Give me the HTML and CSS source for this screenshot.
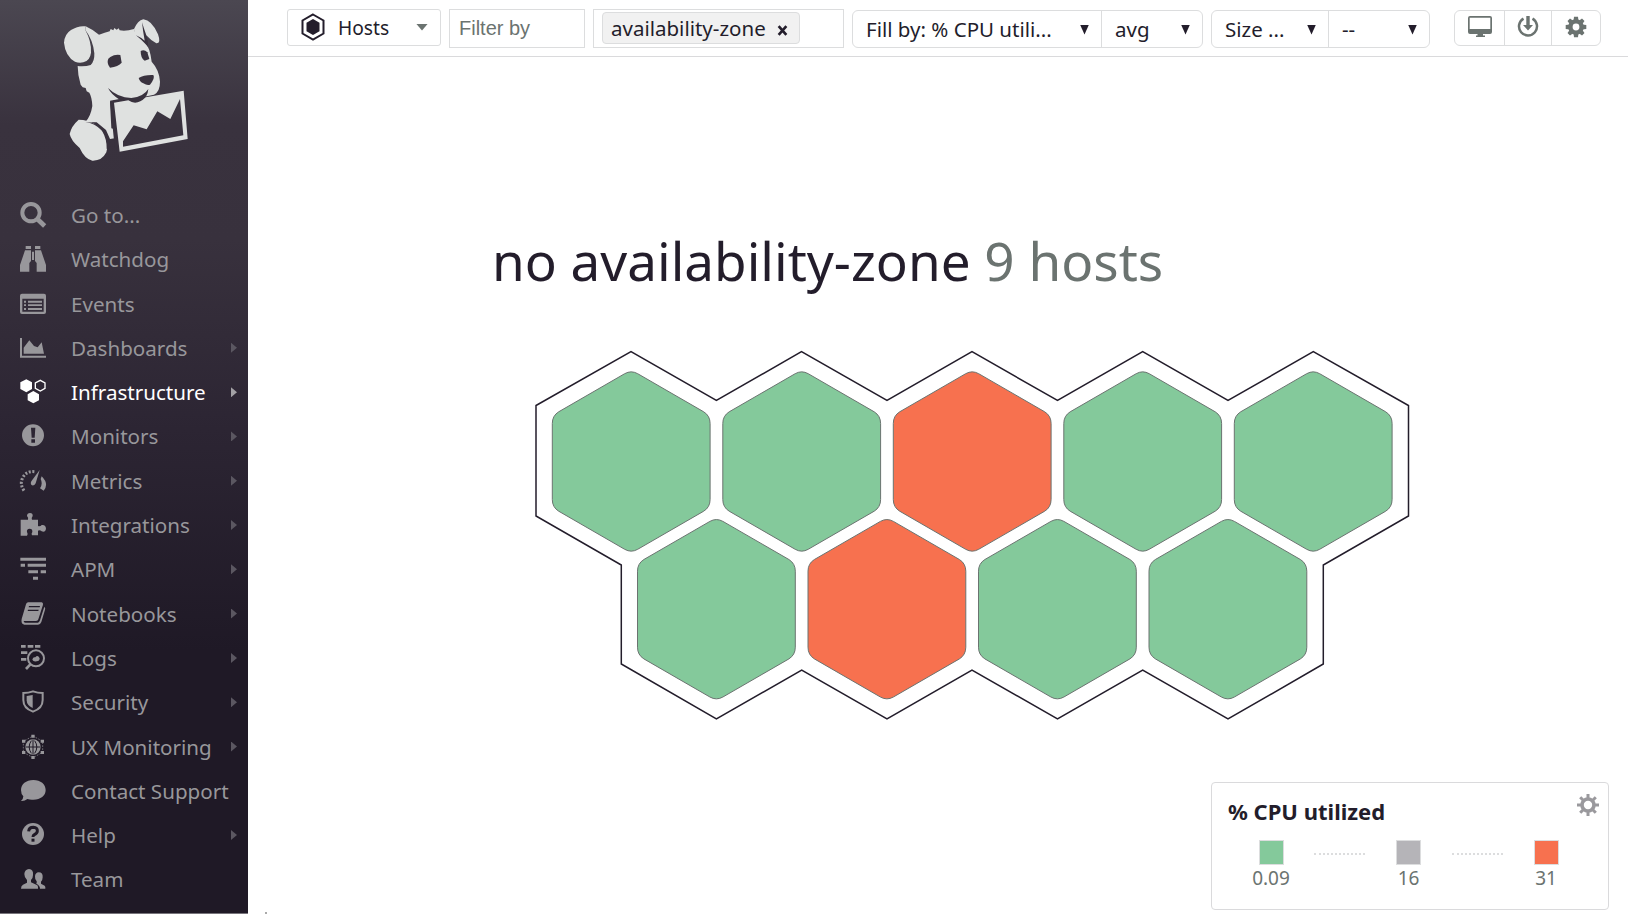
FILE: index.html
```html
<!DOCTYPE html>
<html lang="en">
<head>
<meta charset="utf-8">
<title>Host Map</title>
<link rel="stylesheet" href="styles.css">
</head>
<body>
<div class="app">
  <nav class="sidebar">
    <svg class="logo" viewBox="0 0 750 540" fill="#dfe1e0">
      <path d="M277 318Q276 292 268 278L260 274L257 264L248 262L242 254Q233 225 233 198Q256 200 272 195Q284 184 283 160Q279 120 256 90L257 79Q275 87 297 104Q315 98 329 94L332 87L340 91L343 84L350 89L356 85L359 91Q380 94 402 87L408 106L434 125Q450 142 455 185Q478 210 480 245Q480 275 462 284L444 288L360 302L330 306L334 385L344 388L344 415L330 417L318 390L290 367L256 366Q272 350 277 318Z"/>
      <path d="M192 128Q194 102 213 90Q235 76 257 79L256 90Q275 125 273 158Q270 182 250 187Q237 190 225 185Q196 169 192 128Z"/>
      <path d="M402 87Q413 62 430 58Q455 60 474 103Q484 131 469 130Q453 122 439 106L434 126L405 105Z"/>
      <path d="M236 359Q292 360 316 407Q325 434 319 457Q306 483 277 482Q254 477 239 444Q213 422 209 402Q214 378 236 359Z"/>
      <g class="logo-cut">
        <path d="M426 67Q429 94 434 122Q422 112 408 106Q424 119 437 133L444 141Q445 122 439 106Q432 87 426 67Z"/>
        <path d="M331 171Q345 162 361 165L365 188Q355 200 330 203Q319 189 325 176Z"/>
        <path d="M422 153Q433 147 442 157L448 177L434 182Q422 176 422 153Z"/>
        <path d="M416 234Q431 224 460 225Q466 234 450 254Q442 258 430 250Q419 246 416 234Z"/>
        <path d="M324 264Q353 293 394 294Q431 290 445 267Q443 292 422 306Q389 315 359 299Q334 284 324 264Z"/>
        <path d="M256 366Q291 366 314 392Q325 408 331 440L320 447Q321 417 306 392Q285 370 256 366Z"/>
        <path d="M330 302L358 297L370 302L342 307L356 445L344 441Z"/>
      </g>
      <path fill-rule="evenodd" d="M342 308L385 301Q410 319 437 292L551 272L563 417L359 455ZM369 424L401 376L440 388L472 334L511 357L540 297L550 406L369 440Z"/>
    </svg>
    <ul class="menu">
      <li class="item"><svg class="icon" viewBox="0 0 84 84"><circle class="line" cx="36" cy="35" r="26" stroke-width="12"/><path class="line" d="M55 54L77 75" stroke-width="14"/></svg><span>Go to...</span></li>
      <li class="item"><svg class="icon" viewBox="0 0 84 84"><path d="M20 3H36V12H20ZM48 3H64V12H48ZM18 16H36V48L31 54V80H3V60ZM66 16H48V48L53 54V80H81V60ZM39 20H45V45H39Z"/></svg><span>Watchdog</span></li>
      <li class="item"><svg class="icon" viewBox="0 0 84 84"><path fill-rule="evenodd" d="M9 11H75Q81 11 81 17V66Q81 72 75 72H9Q3 72 3 66V17Q3 11 9 11ZM10 26V65H74V26Z"/><path d="M15 32H21V38H15ZM27 32H69V38H27ZM15 43H21V48H15ZM27 43H69V48H27ZM15 54H21V60H15ZM27 54H69V60H27Z"/></svg><span>Events</span></li>
      <li class="item"><svg class="icon" viewBox="0 0 84 84"><path d="M3 12H9V65H81V71H3ZM14 59V41L31 19L45 36L56 40L68 25L75 59Z"/></svg><span>Dashboards</span><i class="arrow"></i></li>
      <li class="item active"><svg class="icon" viewBox="0 0 84 84"><path d="M22 4L39 13V33L22 43L4 33V13ZM43 39L60 49V67L43 76L26 67V49Z"/><path class="line" d="M64 7L78 15V31L64 39L49 31V15Z" stroke-width="4"/></svg><span>Infrastructure</span><i class="arrow"></i></li>
      <li class="item"><svg class="icon" viewBox="0 0 84 84"><path fill-rule="evenodd" d="M42 7A33 33 0 1 1 42 73A33 33 0 1 1 42 7ZM36 17L38 47H47L49 17ZM37 52V62H48V52Z"/></svg><span>Monitors</span><i class="arrow"></i></li>
      <li class="item"><svg class="icon" viewBox="0 0 84 84"><path class="line" d="M15 71Q2 51 10 35Q20 11 47 14" stroke-width="9" stroke-dasharray="6 5"/><path d="M62 9L50 49Q47 57 39 55Q33 51 37 43ZM68 28Q91 51 74 71L63 64Q72 51 65 36Z"/></svg><span>Metrics</span><i class="arrow"></i></li>
      <li class="item"><svg class="icon" viewBox="0 0 84 84"><path d="M5 26H27Q29 20 24 15Q24 6 33 6Q42 6 41 15Q36 21 39 26H57V45Q64 47 68 42Q80 40 81 53Q79 65 68 61Q62 55 57 59V73H39Q36 68 40 63Q41 53 32 53Q22 54 24 63Q28 69 24 74H5Z"/></svg><span>Integrations</span><i class="arrow"></i></li>
      <li class="item"><svg class="icon" viewBox="0 0 84 84"><path d="M4 8H81V17H4ZM5 26H18V35H5ZM26 26H81V35H26ZM28 46H57V55H28ZM65 46H81V55H65ZM42 65H57V74H42Z"/></svg><span>APM</span><i class="arrow"></i></li>
      <li class="item"><svg class="icon" viewBox="0 0 84 84"><path fill-rule="evenodd" d="M27 7H68Q73 8 72 14L58 58Q57 63 51 63H14Q14 68 19 68H57Q61 67 63 61L76 20Q80 24 78 29L67 66Q64 74 57 74H16Q5 72 8 57L21 13Q22 8 27 7ZM30 18L29 22H62L63 18ZM27 29L26 33H58L59 29Z"/></svg><span>Notebooks</span><i class="arrow"></i></li>
      <li class="item"><svg class="icon" viewBox="0 0 84 84"><path d="M6 3H20V11H6ZM26 3H43V11H26ZM48 3H64V11H48ZM6 22H25V30H6ZM6 42H22V50H6Z"/><circle class="line" cx="51" cy="43" r="24" stroke-width="6"/><path class="line" d="M34 61L21 75" stroke-width="8"/><path d="M40 47Q42 38 49 40Q56 30 62 43Q62 52 53 52Q43 54 40 47Z"/></svg><span>Logs</span><i class="arrow"></i></li>
      <li class="item"><svg class="icon" viewBox="0 0 84 84"><path class="line" d="M13 15Q28 15 42 10Q56 15 71 15V36Q71 61 42 71Q13 61 13 36Z" stroke-width="6"/><path d="M41 21V60Q23 52 23 37V24Z"/></svg><span>Security</span><i class="arrow"></i></li>
      <li class="item"><svg class="icon" viewBox="0 0 84 84"><path class="line" d="M42 9L71 25V58L42 74L13 58V25Z" stroke-width="2" stroke-dasharray="5 4"/><circle cx="42" cy="42" r="23"/><path class="mark" d="M20 42H64M42 20V64M37 23Q24 42 37 61M47 23Q60 42 47 61" stroke-width="3"/><path d="M37 5H47V14H37ZM37 69H47V78H37ZM9 20H19V29H9ZM65 20H75V29H65ZM9 54H19V63H9ZM65 54H75V63H65Z"/></svg><span>UX Monitoring</span><i class="arrow"></i></li>
      <li class="item"><svg class="icon" viewBox="0 0 84 84"><path d="M43 9C65 9 80 22 80 39S65 68 43 68Q34 69 25 66Q17 73 6 72Q13 66 13 58Q6 51 6 39C6 22 21 9 43 9Z"/></svg><span>Contact Support</span></li>
      <li class="item"><svg class="icon" viewBox="0 0 84 84"><path d="M42 6A33 33 0 1 1 42 72A33 33 0 1 1 42 6Z"/><path class="mark" d="M29 31Q30 19 43 19Q56 20 55 30Q55 36 46 41Q42 43 42 48" stroke-width="9"/><path class="mark" d="M42 53V62" stroke-width="9"/></svg><span>Help</span><i class="arrow"></i></li>
      <li class="item"><svg class="icon" viewBox="0 0 84 84"><path d="M30 12Q44 14 42 30Q42 40 36 45V52L55 61Q58 65 57 71H6Q6 62 12 59L24 53V45Q16 38 16 27Q17 13 30 12ZM59 22Q72 22 71 37Q71 45 66 50V56L77 62Q80 65 79 71H63Q63 62 52 56Q54 52 53 49Q47 41 48 34Q49 23 59 22Z"/></svg><span>Team</span></li>
    </ul>
  </nav>
  <main class="main">
    <header class="toolbar">
      <div class="box hosts"><svg class="hosts-icon" viewBox="0 0 24 28"><path d="M12 1.500L22.500 7.500V20.500L12 26.500L1.500 20.500V7.500Z" fill="none" stroke="#231d2b" stroke-width="2"/><path d="M12 6L18.500 9.800V18.200L12 22L5.500 18.200V9.800Z" fill="#231d2b"/></svg><span class="hosts-label">Hosts</span><i class="caret"></i></div>
      <div class="box filter">Filter by</div>
      <div class="box group"><span class="tag"><span class="tag-label">availability-zone</span><svg class="close" viewBox="0 0 10 10"><path d="M1.500 1L8.500 9M8.500 1L1.500 9" stroke="#231d2b" stroke-width="2.400"/></svg></span></div>
      <div class="selects fill"><div class="select"><span class="fill-label">Fill by: % CPU utili...</span><i class="tri"></i></div><div class="select"><span>avg</span><i class="tri"></i></div></div>
      <div class="selects size"><div class="select"><span>Size ...</span><i class="tri"></i></div><div class="select"><span>--</span><i class="tri"></i></div></div>
      <div class="buttons">
        <div class="button"><svg width="24" height="22" viewBox="0 0 24 22"><path fill-rule="evenodd" d="M2 0H22Q24 0 24 2V16Q24 18 22 18H15V19.500H17V21H8V19.500H9.500V18H2Q0 18 0 16V2Q0 0 2 0ZM1.700 1.700V13H22.300V1.700Z"/></svg></div>
        <div class="button"><svg width="22" height="22" viewBox="0 0 22 22"><path d="M6.500 2.600A9 9 0 1 0 15.500 2.600" fill="none" stroke="#6b7370" stroke-width="2.500"/><path d="M9.300 0H12.700V9H16L11 14.500L6 9H9.300Z"/></svg></div>
        <div class="button"><svg width="22" height="22" viewBox="0 0 22 22"><circle cx="11" cy="11" r="5.600" fill="none" stroke="#6b7370" stroke-width="4.400"/><path d="M9 0.700H13L13.500 5H8.500ZM9 21.300H13L13.500 17H8.500ZM0.700 9V13L5 13.500V8.500ZM21.300 9V13L17 13.500V8.500ZM2.500 5L5 2.500L8.500 5L5 8.500ZM19.500 5L17 2.500L13.500 5L17 8.500ZM2.500 17L5 19.500L8.500 17L5 13.500ZM19.500 17L17 19.500L13.500 17L17 13.500Z"/></svg></div>
      </div>
    </header>
    <h1 class="title"><span>no availability-zone</span> <span class="count">9 hosts</span></h1>
    <svg class="map" viewBox="248 340 1380 390">
      <defs><path id="hex" d="M6.500-87.800L72.500-49.700Q78.900-45.700 78.900-38V38Q78.900 45.700 72.500 49.700L6.500 87.800Q0 91.500-6.500 87.800L-72.500 49.700Q-78.900 45.700-78.900 38V-38Q-78.900-45.700-72.500-49.700L-6.500-87.800Q0-91.500 6.500-87.800Z"/></defs>
      <path class="outline" d="M536 405.500L631 351.700L716.400 400.500L801.500 351.700L887 400.500L972 351.700L1057.500 400.500L1142.700 351.700L1228 400.500L1313.300 351.700L1408.500 405.500V516L1323.300 565V664L1228 719L1142.700 670L1057.500 719L972 670L887 719L801.700 670L716.400 719L621.300 664V565L536 516Z"/>
      <g class="host">
        <use href="#hex" x="631.200" y="461.500"/><use href="#hex" x="801.700" y="461.500"/><use class="hot" href="#hex" x="972.200" y="461.500"/><use href="#hex" x="1142.700" y="461.500"/><use href="#hex" x="1313.200" y="461.500"/>
        <use href="#hex" x="716.400" y="609.200"/><use class="hot" href="#hex" x="886.900" y="609.200"/><use href="#hex" x="1057.400" y="609.200"/><use href="#hex" x="1227.900" y="609.200"/>
      </g>
    </svg>
    <aside class="legend">
      <div class="legend-title">% CPU utilized</div>
      <svg class="legend-gear" viewBox="0 0 22 22"><circle cx="11" cy="11" r="6" fill="none" stroke="#9a999d" stroke-width="3.600"/><path d="M11 0V5M11 17V22M0 11H5M17 11H22M3.200 3.200L7 7M15 15L18.800 18.800M18.800 3.200L15 7M3.200 18.800L7 15" stroke="#9a999d" stroke-width="3"/></svg>
      <div class="scale">
        <div class="stop"><b class="swatch low"></b>0.09</div><i class="dash"></i>
        <div class="stop"><b class="swatch mid"></b>16</div><i class="dash"></i>
        <div class="stop"><b class="swatch high"></b>31</div>
      </div>
    </aside>
    <i class="speck"></i>
  </main>
</div>
</body>
</html>
```
FILE: styles.css
```css
* { box-sizing: border-box; }
body { margin: 0; background: #fff; font-family: "Noto Sans", sans-serif; color: #231d2b; }
.app { display: flex; width: 1628px; height: 914px; overflow: hidden; }
.sidebar { width: 248px; height: 914px; flex: none; background: linear-gradient(#4b4751 0, #39323e 125px, #38313d 240px, #2c2533 430px, #1f1926 650px); border-bottom: 1px solid #77747b; overflow: hidden; }
.logo { display: block; width: 250px; height: 180px; }
.logo-cut { fill: #39323e; }
.menu { list-style: none; margin: 0; padding: 12.800px 0 0; }
.item { display: flex; align-items: center; height: 44.300px; padding-left: 19px; padding-right: 11px; color: #98979b; font-size: 20.600px; white-space: nowrap; }
.item span { margin-left: 24px; flex: 1; }
.icon { width: 28px; height: 28px; flex: none; fill: currentColor; }
.line { fill: none; stroke: currentColor; }
.mark { fill: none; stroke: #1f1926; }
.active { color: #fff; }
.arrow { width: 6px; height: 10px; background: #5b5761; clip-path: polygon(0 0, 100% 50%, 0 100%); }
.active .arrow { background: #a3a1a5; }
.main { position: relative; flex: 1; height: 914px; }
.toolbar { display: flex; align-items: flex-start; height: 57px; padding: 9px 0 0 39px; border-bottom: 1px solid #dadadc; font-size: 20.500px; white-space: nowrap; }
.box { display: flex; align-items: center; height: 39px; border: 1px solid #dcddde; }
.hosts { width: 154px; height: 37px; border-radius: 3px; padding: 0 12px 1px 13px; }
.hosts-icon { width: 24px; height: 28px; }
.hosts-label { flex: 1; margin-left: 13px; font-size: 19.200px; }
.caret { width: 12px; height: 7px; background: #6b7370; clip-path: polygon(0 0, 100% 0, 50% 100%); }
.filter { width: 136px; margin-left: 8px; padding-left: 9px; font-family: "Liberation Sans", sans-serif; color: #6b7370; font-size: 20px; }
.group { width: 251px; margin-left: 8px; padding: 0 0 1px 8px; }
.tag { display: flex; align-items: center; width: 198px; height: 32px; background: #f1f1f1; border: 1px solid #dcddde; border-radius: 4px; padding: 0 0 1px 8px; }
.close { width: 11px; height: 11px; margin-left: 11px; margin-top: 5px; }
.selects { display: grid; height: 38px; margin-top: 1px; border: 1px solid #dcddde; border-radius: 6px; }
.fill { width: 351px; margin-left: 8px; grid-template-columns: 248px 1fr; }
.size { width: 219px; margin-left: 8px; grid-template-columns: 116px 1fr; }
.select { display: flex; align-items: center; justify-content: space-between; padding: 0 12px 1px 13px; }
.select + .select { border-left: 1px solid #dcddde; }
.tri { width: 9px; height: 10px; margin-top: 2px; background: #231d2b; clip-path: polygon(0 0, 100% 0, 50% 100%); }
.buttons { display: grid; grid-template-columns: 49px 47px 1fr; width: 147px; height: 36px; margin: 1px 0 0 24px; border: 1px solid #dcddde; border-radius: 6px; }
.button { display: flex; align-items: center; justify-content: center; padding-bottom: 2px; fill: #6b7370; }
.button + .button { border-left: 1px solid #dcddde; }
.title { margin: 0; height: 283px; padding: 167px 0 0 244px; font-size: 53px; line-height: 74px; font-weight: 400; white-space: nowrap; }
.count { color: #6b7370; }
.map { display: block; width: 1380px; height: 390px; }
.outline { fill: none; stroke: #231d2b; stroke-width: 1.500; }
.host { fill: #84c99b; stroke: #6b7370; stroke-width: 1; }
.hot { fill: #f7714f; }
.legend { position: absolute; left: 963px; top: 782px; width: 398px; height: 128px; border: 1px solid #dadadc; border-radius: 4px; background: #fff; padding: 13px 16px 0 16px; }
.legend-title { font-size: 22px; line-height: 30px; font-weight: 700; white-space: nowrap; }
.legend-gear { position: absolute; right: 9px; top: 11px; width: 22px; height: 22px; }
.scale { display: flex; width: 361px; justify-content: space-between; margin-top: 14px; }
.stop { width: 86px; flex: none; display: flex; flex-direction: column; align-items: center; font-size: 19px; line-height: 27px; color: #6b7370; }
.swatch { width: 25px; height: 25px; border: 1px solid #dcddde; }
.low { background: #84c99b; }
.mid { background: #b5b4b8; }
.high { background: #f7714f; }
.dash { width: 51px; margin-top: 13px; border-top: 2px dotted #dcddde; height: 0; }
.speck { position: absolute; left: 17px; bottom: 0; width: 2px; height: 2px; background: #aaa; }
```
